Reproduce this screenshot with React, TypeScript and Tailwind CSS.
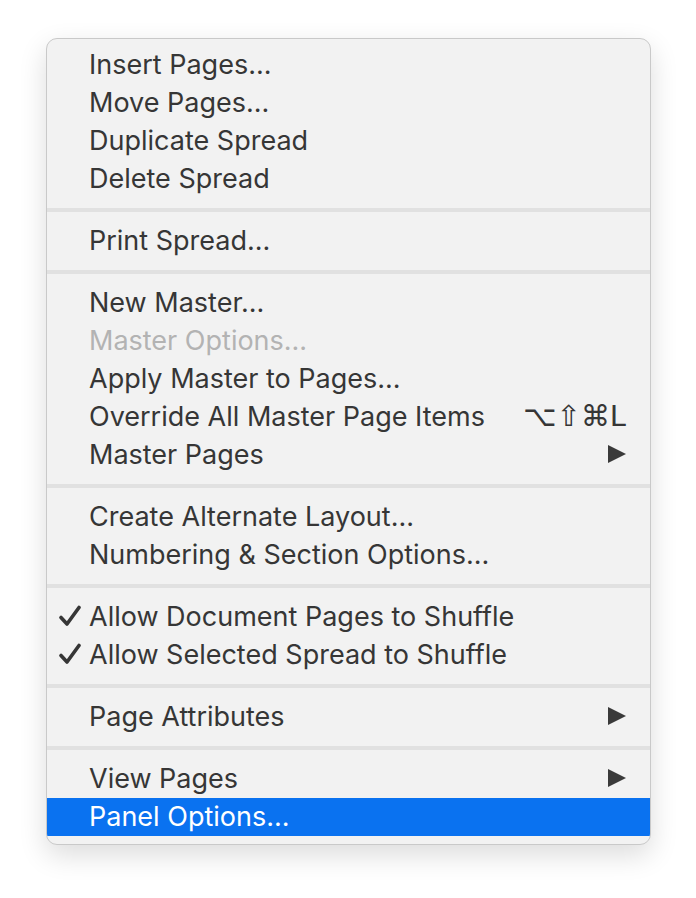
type Item =
  | { kind: 'sep' }
  | { kind: 'item'; label: string; disabled?: boolean; checked?: boolean; shortcut?: string; submenu?: boolean; active?: boolean };

const ITEMS: Item[] = [
  { kind: 'item', label: 'Insert Pages...' },
  { kind: 'item', label: 'Move Pages...' },
  { kind: 'item', label: 'Duplicate Spread' },
  { kind: 'item', label: 'Delete Spread' },
  { kind: 'sep' },
  { kind: 'item', label: 'Print Spread...' },
  { kind: 'sep' },
  { kind: 'item', label: 'New Master...' },
  { kind: 'item', label: 'Master Options...', disabled: true },
  { kind: 'item', label: 'Apply Master to Pages...' },
  { kind: 'item', label: 'Override All Master Page Items', shortcut: '⌥⇧⌘L' },
  { kind: 'item', label: 'Master Pages', submenu: true },
  { kind: 'sep' },
  { kind: 'item', label: 'Create Alternate Layout...' },
  { kind: 'item', label: 'Numbering & Section Options...' },
  { kind: 'sep' },
  { kind: 'item', label: 'Allow Document Pages to Shuffle', checked: true },
  { kind: 'item', label: 'Allow Selected Spread to Shuffle', checked: true },
  { kind: 'sep' },
  { kind: 'item', label: 'Page Attributes', submenu: true },
  { kind: 'sep' },
  { kind: 'item', label: 'View Pages', submenu: true },
  { kind: 'item', label: 'Panel Options...', active: true },
];

function Check() {
  return (
    <svg width="22" height="22" viewBox="0 0 22 22" fill="none">
      <path d="M2 12.5L8 19L20 2.5" stroke="currentColor" strokeWidth="3.6" strokeLinecap="round" strokeLinejoin="round" />
    </svg>
  );
}

function Arrow() {
  return (
    <svg width="18" height="18" viewBox="0 0 18 18">
      <path d="M0 0L18 9L0 18Z" fill="currentColor" />
    </svg>
  );
}

export default function App() {
  return (
    <div className="min-h-screen bg-white pt-[38px] pl-[46px]" style={{ fontFamily: 'Inter, "Liberation Sans", sans-serif' }}>
      <div className="w-[605px] rounded-[11px] border border-[#c9c9c9] bg-[#f2f2f2] pt-[7px] pb-[8px] shadow-[0_10px_28px_rgba(0,0,0,0.14)] overflow-hidden">
        {ITEMS.map((it, i) =>
          it.kind === 'sep' ? (
            <div key={i} className="py-[10px]">
              <div className="h-[4px] bg-[#e1e1e1]" />
            </div>
          ) : (
            <div
              key={i}
              className={`flex h-[38px] items-center pr-[24px] pb-[2px] text-[27px] leading-none ${
                it.active ? 'bg-[#0a72f0] text-white' : it.disabled ? 'text-[#b3b3b3]' : 'text-[#363636]'
              }`}
            >
              <span className="flex w-[42px] justify-end pr-[8px] text-[#363636]">{it.checked && <Check />}</span>
              <span className="flex-1 whitespace-nowrap">{it.label}</span>
              {it.shortcut && (
                <span className="whitespace-nowrap text-[29px]" style={{ fontFamily: '"DejaVu Sans", sans-serif' }}>
                  {it.shortcut}
                </span>
              )}
              {it.submenu && (
                <span className="text-[#3a3a3a]">
                  <Arrow />
                </span>
              )}
            </div>
          ),
        )}
      </div>
    </div>
  );
}
